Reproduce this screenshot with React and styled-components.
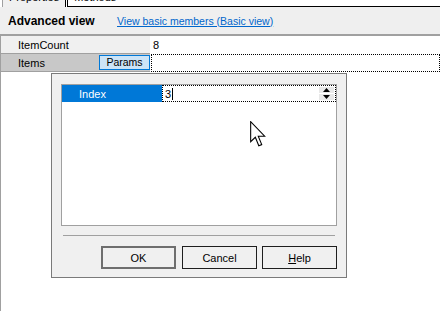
import styled, { createGlobalStyle } from 'styled-components';

const GlobalStyle = createGlobalStyle`
  html, body {
    margin: 0;
    padding: 0;
    background: #ffffff;
  }
  body {
    font-family: 'Liberation Sans', Arial, sans-serif;
    font-size: 11px;
    color: #000;
  }
`;

const Page = styled.div`
  width: 440px;
  height: 311px;
  position: relative;
  overflow: hidden;
  display: flex;
  flex-direction: column;
  background: #fff;
`;

const TabStrip = styled.div`
  height: 7px;
  display: flex;
  overflow: hidden;
`;

const Tab = styled.div`
  height: ${p => (p.active ? '7px' : '6px')};
  padding: 0 6px;
  box-sizing: border-box;
  overflow: hidden;
  background: ${p => (p.active ? '#f0f0f0' : '#fff')};
  border-left: 1px solid ${p => (p.active ? '#a0a0a0' : '#000')};
  border-right: ${p => (p.active ? '1px solid #000' : 'none')};
  border-bottom: ${p => (p.active ? 'none' : '1px solid #000')};
  margin-left: ${p => (p.active ? '2px' : '1px')};
  flex: ${p => (p.grow ? 1 : 'none')};
  ${p => p.grow && 'height: 7px;'}

  span {
    display: block;
    line-height: 13px;
    margin-top: -9px;
    white-space: nowrap;
  }
`;

const Header = styled.div`
  height: 27px;
  background: #efefef;
  display: flex;
  align-items: center;
  padding-left: 8px;
  border-bottom: 2px solid #a0a0a0;
`;

const Title = styled.span`
  font-weight: bold;
  font-size: 12px;
  width: 109px;
`;

const Link = styled.a`
  color: #0066cc;
  text-decoration: underline;
  font-size: 10.5px;
  cursor: pointer;
`;

const Grid = styled.div`
  flex: 1;
  border-left: 1px solid #a0a0a0;
`;

const Row = styled.div`
  display: grid;
  grid-template-columns: 149px 1fr;
  height: 18px;
`;

const NameCell = styled.div`
  background: ${p => (p.selected ? '#c8c8c8' : '#f0f0f0')};
  border-bottom: 1px solid #a0a0a0;
  display: flex;
  align-items: center;
  padding-left: 17px;
`;

const ValueCell = styled.div`
  display: flex;
  align-items: center;
  padding-left: 2px;
  margin-left: 1px;
  box-sizing: border-box;
  ${p => p.focused && 'border: 1px dotted #000;'}
`;

const ParamsButton = styled.button`
  margin-left: auto;
  width: 51px;
  height: 15px;
  padding: 0;
  border: 1px solid #0078d7;
  background: #cce4f7;
  font-family: inherit;
  font-size: 10.5px;
  line-height: 13px;
  color: #000;
`;

const Dialog = styled.div`
  position: absolute;
  left: 51px;
  top: 73px;
  width: 296px;
  height: 205px;
  box-sizing: border-box;
  background: #f0f0f0;
  border: 1px solid #7a7a7a;
  padding: 10px 9px 0;
  display: flex;
  flex-direction: column;
`;

const ParamList = styled.div`
  height: 142px;
  box-sizing: border-box;
  background: #fff;
  border: 1px solid #a0a0a0;
`;

const ParamRow = styled.div`
  display: grid;
  grid-template-columns: 100px 1fr;
  height: 17px;
`;

const ParamName = styled.div`
  background: #0078d7;
  color: #fff;
  padding-left: 17px;
  display: flex;
  align-items: center;
`;

const ParamValue = styled.div`
  border: 1px dotted #000;
  display: flex;
  align-items: center;
  padding-left: 2px;
`;

const Caret = styled.span`
  display: inline-block;
  width: 1px;
  height: 12px;
  background: #000;
  margin-left: 1px;
`;

const Spinner = styled.div`
  margin-left: auto;
  margin-right: 1px;
  display: flex;
  flex-direction: column;
  gap: 1px;
`;

const SpinBox = styled.div`
  width: 15px;
  height: 6px;
  background: #e8e8e8;
  display: flex;
  align-items: center;
  justify-content: center;
`;

const Separator = styled.div`
  margin: 9px 2px 0;
  height: 1px;
  background: #a0a0a0;
`;

const ButtonRow = styled.div`
  display: flex;
  justify-content: flex-end;
  gap: 5px;
  margin-top: 10px;
`;

const DialogButton = styled.button`
  width: 75px;
  height: 23px;
  box-sizing: border-box;
  background: #f0f0f0;
  border: ${p => (p.isDefault ? '2px solid #6e6e6e' : '1px solid #1e1e1e')};
  font-family: inherit;
  font-size: 11px;
  color: #000;
  padding: 0;
  ${p => p.isDefault && 'margin-right: 1px;'}

  u {
    text-decoration: underline;
  }
`;

const Cursor = styled.svg`
  position: absolute;
  left: 250px;
  top: 121px;
`;

const Arrow = ({ down }) => (
  <svg width="7" height="4" viewBox="0 0 7 4">
    <path d={down ? 'M0 0 H7 L3.5 4 Z' : 'M0 4 H7 L3.5 0 Z'} fill="#000" />
  </svg>
);

export default function App() {
  return (
    <>
      <GlobalStyle />
      <Page>
        <TabStrip>
          <Tab active><span>Properties</span></Tab>
          <Tab grow><span>Methods</span></Tab>
        </TabStrip>
        <Header>
          <Title>Advanced view</Title>
          <Link>View basic members (Basic view)</Link>
        </Header>
        <Grid>
          <Row>
            <NameCell>ItemCount</NameCell>
            <ValueCell>8</ValueCell>
          </Row>
          <Row>
            <NameCell selected>
              Items
              <ParamsButton>Params</ParamsButton>
            </NameCell>
            <ValueCell focused />
          </Row>
        </Grid>

        <Dialog>
          <ParamList>
            <ParamRow>
              <ParamName>Index</ParamName>
              <ParamValue>
                3<Caret />
                <Spinner>
                  <SpinBox><Arrow /></SpinBox>
                  <SpinBox><Arrow down /></SpinBox>
                </Spinner>
              </ParamValue>
            </ParamRow>
          </ParamList>
          <Separator />
          <ButtonRow>
            <DialogButton isDefault>OK</DialogButton>
            <DialogButton>Cancel</DialogButton>
            <DialogButton><u>H</u>elp</DialogButton>
          </ButtonRow>
        </Dialog>

        <Cursor width="16" height="26" viewBox="0 0 12 19.5">
          <path
            d="M0.5 0.5 V15.5 L4 12.2 L6.6 18.6 L8.8 17.7 L6.2 11.4 H11 Z"
            fill="#fff"
            stroke="#000"
            strokeWidth="0.8"
            strokeLinejoin="miter"
          />
        </Cursor>
      </Page>
    </>
  );
}
